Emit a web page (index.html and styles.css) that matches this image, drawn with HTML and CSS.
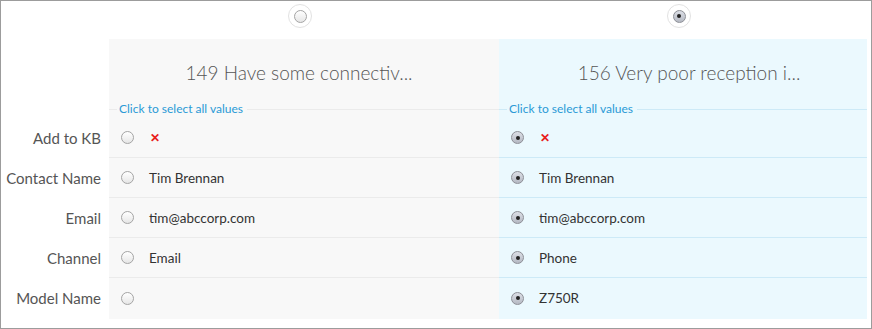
FILE: index.html
```html
<!doctype html>
<html lang="en">
<head>
    <title>Merge Tickets</title>
    <meta charset="utf-8" name="viewport" content="width=device-width,initial-scale=1">
    <link rel="stylesheet" href="styles.css">
</head>
<body>
    <div class="merge">
        <div class="labels">
            <div class="label_spacer"></div>
            <div class="label">Add to KB</div>
            <div class="label">Contact Name</div>
            <div class="label">Email</div>
            <div class="label">Channel</div>
            <div class="label">Model Name</div>
        </div>

        <div class="record">
            <div class="pick"><span class="halo"><span class="radio"></span></span></div>
            <div class="record_body">
                <div class="record_title">149 Have some connectiv...</div>
                <div class="select_all"><span>Click to select all values</span></div>
                <div class="field"><span class="radio"></span><span class="no">&#x2715;</span></div>
                <div class="field"><span class="radio"></span>Tim Brennan</div>
                <div class="field"><span class="radio"></span>tim@abccorp.com</div>
                <div class="field"><span class="radio"></span>Email</div>
                <div class="field"><span class="radio"></span></div>
            </div>
        </div>

        <div class="record master">
            <div class="pick"><span class="halo"><span class="radio on"></span></span></div>
            <div class="record_body">
                <div class="record_title">156 Very poor reception i...</div>
                <div class="select_all"><span>Click to select all values</span></div>
                <div class="field"><span class="radio on"></span><span class="no">&#x2715;</span></div>
                <div class="field"><span class="radio on"></span>Tim Brennan</div>
                <div class="field"><span class="radio on"></span>tim@abccorp.com</div>
                <div class="field"><span class="radio on"></span>Phone</div>
                <div class="field"><span class="radio on"></span>Z750R</div>
            </div>
        </div>
    </div>
</body>
</html>
```

FILE: styles.css
```css
body{
    margin: 0;
    font-family: Lato, "Open Sans", sans-serif;
    background: #ffffff;
}
.merge{
    display: flex;
    box-sizing: border-box;
    width: 872px;
    height: 329px;
    border: 1px solid #9c9c9c;
    padding: 0 3px 9px 0;
}
.labels{
    width: 108px;
}
.label_spacer{
    height: 117px;
}
.label{
    height: 40px;
    line-height: 40px;
    text-align: right;
    padding-right: 8px;
    font-size: 15px;
    color: #555555;
}
.record{
    width: 390px;
    display: flex;
    flex-direction: column;
}
.record.master{
    width: 368px;
}
.pick{
    height: 38px;
    display: flex;
    justify-content: center;
    align-items: flex-start;
    padding: 3px 8px 0 0;
    box-sizing: border-box;
}
.halo{
    display: flex;
    justify-content: center;
    align-items: center;
    width: 22px;
    height: 22px;
    border: 1px solid #e2e2e2;
    border-radius: 50%;
}
.record_body{
    flex: 1;
    background-color: #f8f8f8;
    --line: #ebebeb;
}
.master .record_body{
    background-color: #ebf9fe;
    --line: #cdeaf7;
}
.record_title{
    height: 62px;
    line-height: 68px;
    text-align: center;
    font-size: 19px;
    font-weight: 300;
    color: #555555;
    padding-right: 10px;
}
.master .record_title{
    padding: 0 0 0 12px;
}
.select_all{
    display: flex;
    align-items: center;
    height: 17px;
    font-size: 12px;
    color: #2a9ad6;
}
.select_all::before,
.select_all::after{
    content: "";
    border-top: 1px solid var(--line);
}
.select_all::before{
    width: 8px;
}
.select_all::after{
    flex: 1;
}
.select_all span{
    padding: 0 4px 2px 2px;
}
.field{
    display: flex;
    align-items: center;
    height: 40px;
    padding-left: 12px;
    border-bottom: 1px solid var(--line);
    box-sizing: border-box;
    font-size: 13.5px;
    color: #333333;
}
.field:last-child{
    border-bottom: none;
}
.radio{
    display: inline-block;
    box-sizing: border-box;
    width: 13px;
    height: 13px;
    border-radius: 50%;
    border: 1px solid #a4a4a4;
    background: linear-gradient(#ffffff, #e6e6e6);
    margin-right: 15px;
    position: relative;
}
.halo .radio{
    margin-right: 0;
}
.radio.on{
    border-color: #8d8f96;
    background: linear-gradient(#dcdfe6, #b5b9c3);
}
.radio.on::after{
    content: "";
    position: absolute;
    left: 3.5px;
    top: 3.5px;
    width: 4px;
    height: 4px;
    border-radius: 50%;
    background: #222222;
}
.no{
    color: #e8201a;
    font-size: 12px;
    font-weight: bold;
    padding-left: 1px;
}
```
